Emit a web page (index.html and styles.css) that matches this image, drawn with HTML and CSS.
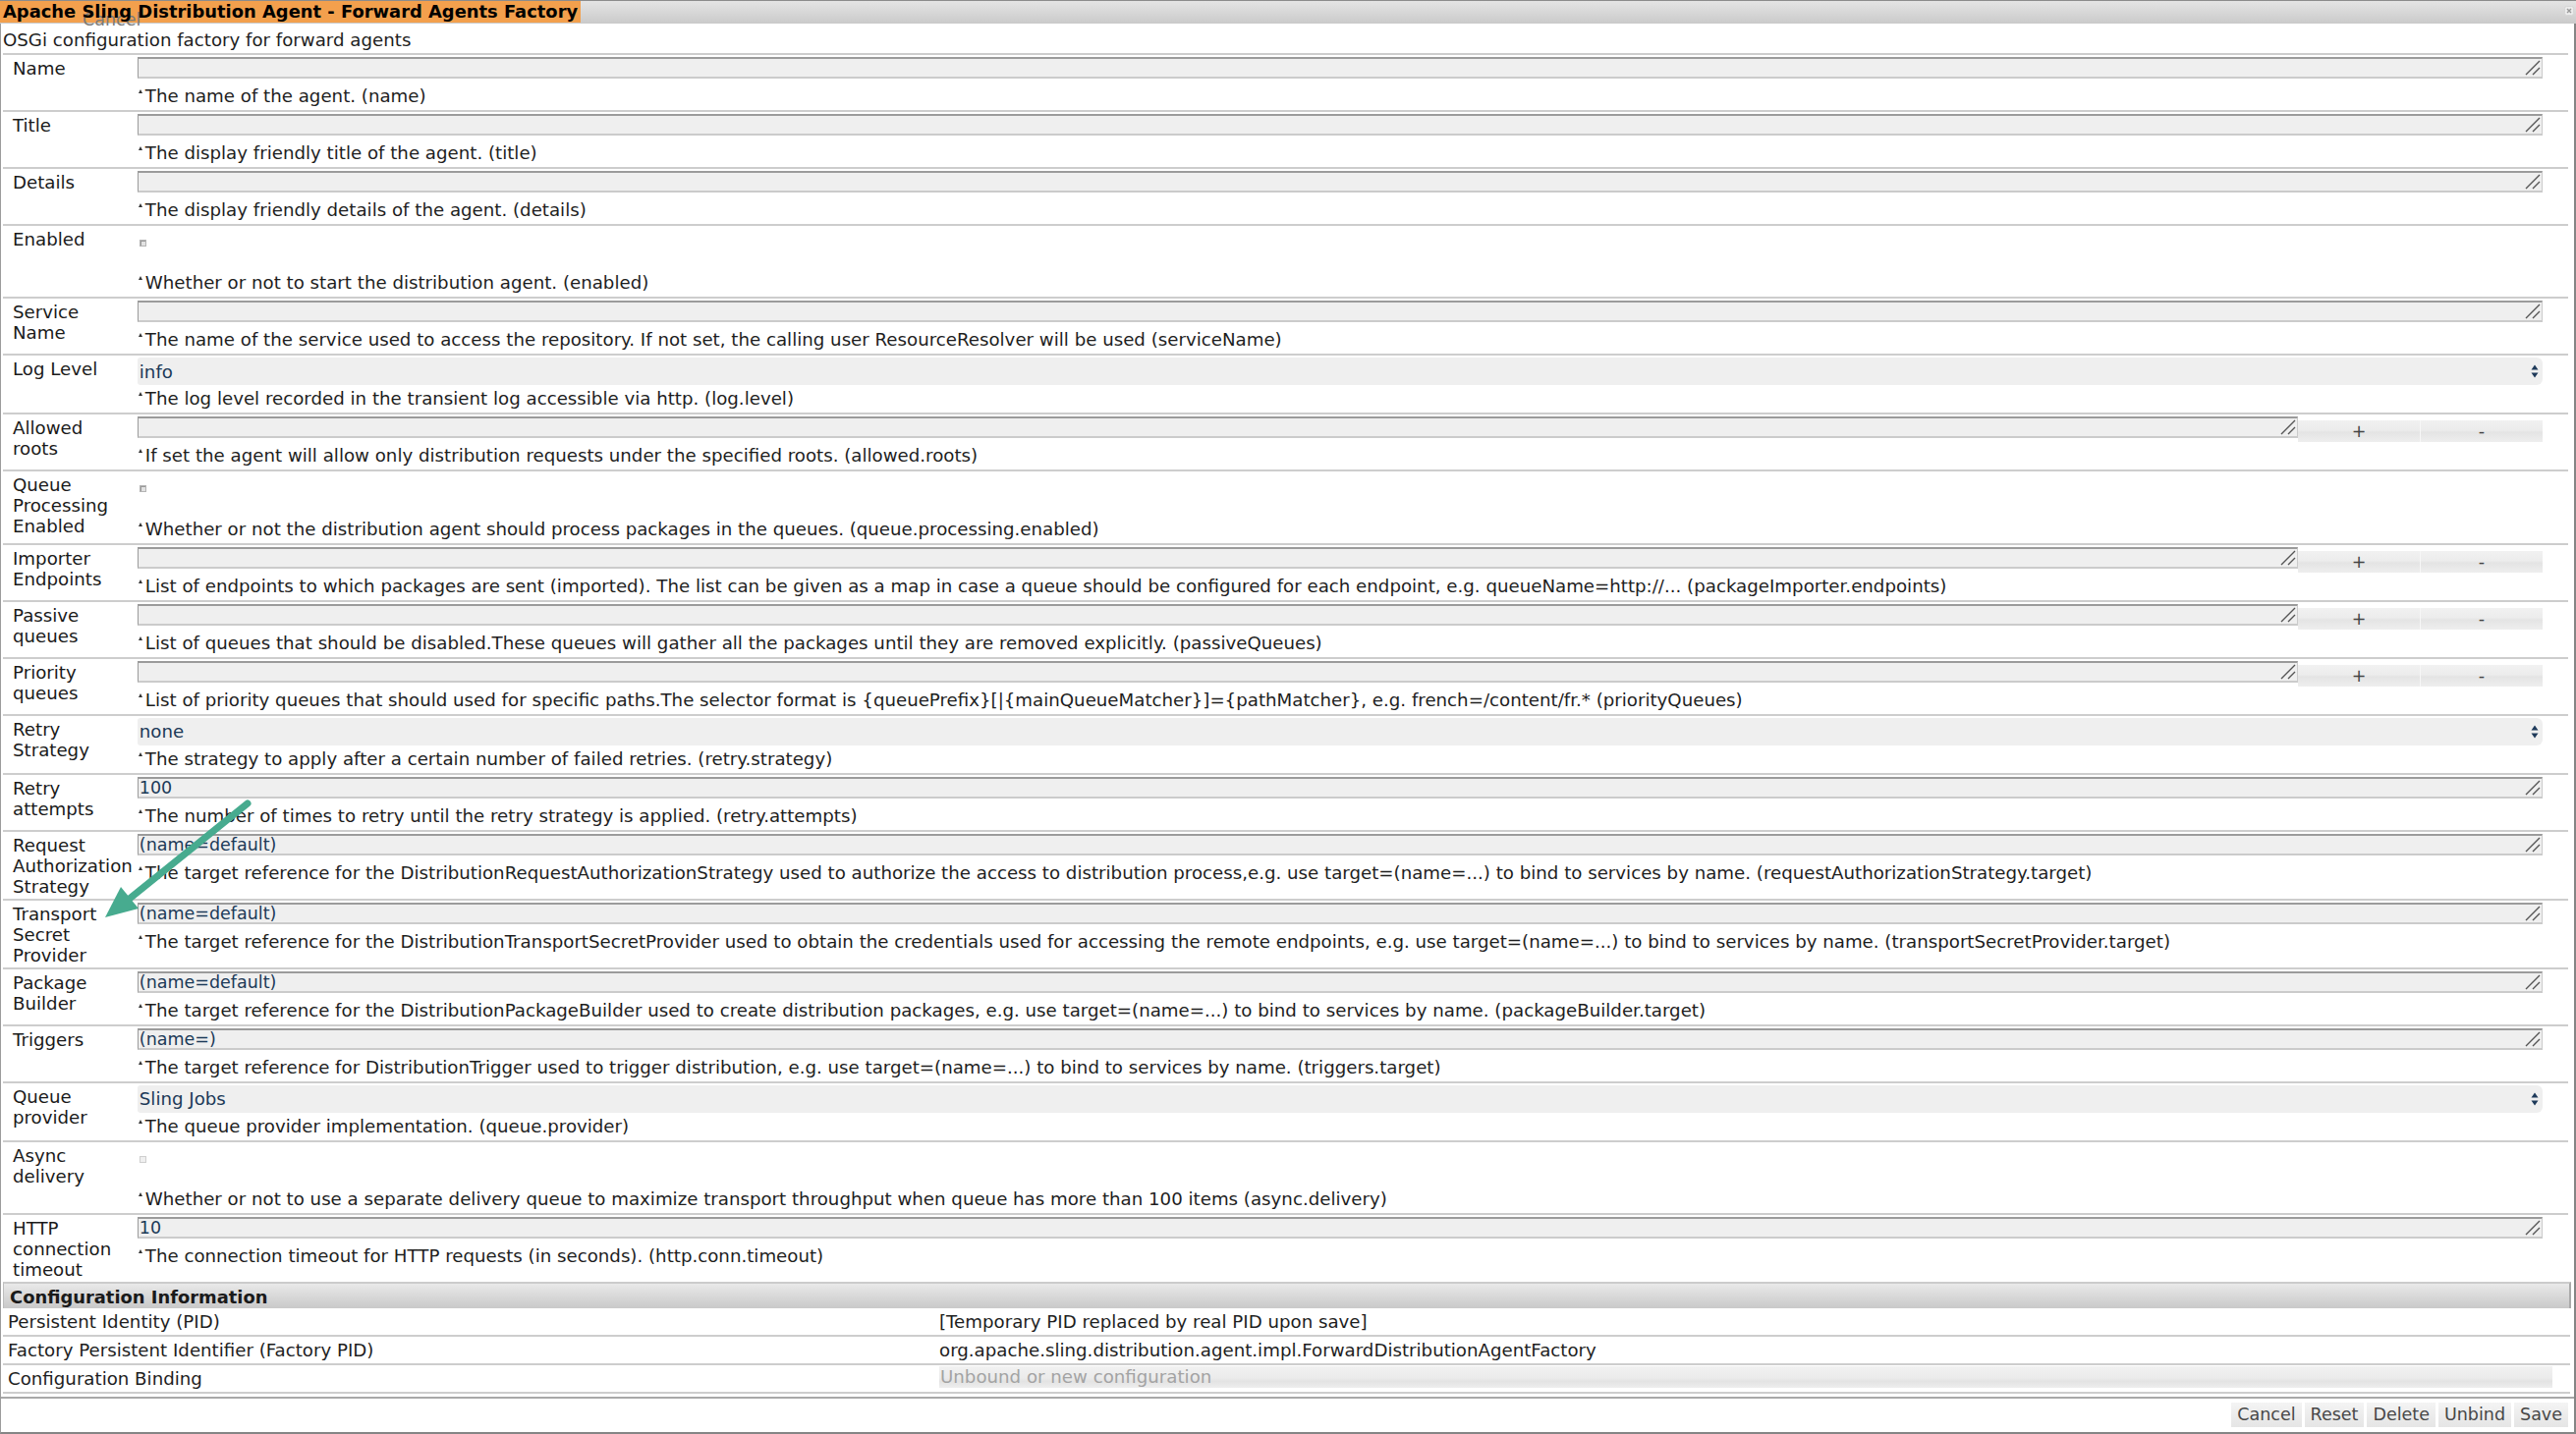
FILE: index.html
```html
<!DOCTYPE html>
<html>
<head>
<meta charset="utf-8">
<title>Apache Sling Distribution Agent - Forward Agents Factory</title>
<link rel="stylesheet" href="styles.css">
</head>
<body>
<div class="window">
  <div class="titlebar">
    <span class="title">Apache Sling Distribution Agent - Forward Agents Factory<span class="ghost">Cancel</span></span>
    <span class="close"><svg width="10" height="10" viewBox="0 0 10 10"><rect x="0.5" y="0.5" width="9" height="9" rx="2" fill="#ececec" stroke="#d6d6d6"/><path d="M3 3 L7 7 M7 3 L3 7" stroke="#9a9a9a" stroke-width="1.4"/></svg></span>
  </div>
  <div class="panel">
    <div class="subtitle">OSGi configuration factory for forward agents</div>
    <table class="props">
      <tr>
        <td class="lbl">Name</td>
        <td class="fld"><div class="tabox"><textarea class="ta"></textarea><svg class="grip" width="16" height="16" viewBox="0 0 16 16"><path d="M1 15 L15 1 M8 15 L15 8" stroke="#555" stroke-width="1.4"/></svg></div><div class="desc"><i class="mk"></i>The name of the agent. (name)</div></td>
      </tr>
      <tr>
        <td class="lbl">Title</td>
        <td class="fld"><div class="tabox"><textarea class="ta"></textarea><svg class="grip" width="16" height="16" viewBox="0 0 16 16"><path d="M1 15 L15 1 M8 15 L15 8" stroke="#555" stroke-width="1.4"/></svg></div><div class="desc"><i class="mk"></i>The display friendly title of the agent. (title)</div></td>
      </tr>
      <tr>
        <td class="lbl">Details</td>
        <td class="fld"><div class="tabox"><textarea class="ta"></textarea><svg class="grip" width="16" height="16" viewBox="0 0 16 16"><path d="M1 15 L15 1 M8 15 L15 8" stroke="#555" stroke-width="1.4"/></svg></div><div class="desc"><i class="mk"></i>The display friendly details of the agent. (details)</div></td>
      </tr>
      <tr>
        <td class="lbl">Enabled</td>
        <td class="fld"><div class="cbwrap"><span class="cb on"></span></div><div class="desc"><i class="mk"></i>Whether or not to start the distribution agent. (enabled)</div></td>
      </tr>
      <tr>
        <td class="lbl">Service Name</td>
        <td class="fld"><div class="tabox"><textarea class="ta"></textarea><svg class="grip" width="16" height="16" viewBox="0 0 16 16"><path d="M1 15 L15 1 M8 15 L15 8" stroke="#555" stroke-width="1.4"/></svg></div><div class="desc"><i class="mk"></i>The name of the service used to access the repository. If not set, the calling user ResourceResolver will be used (serviceName)</div></td>
      </tr>
      <tr>
        <td class="lbl">Log Level</td>
        <td class="fld"><div class="select"><span>info</span><svg width="8" height="14" viewBox="0 0 8 14"><path d="M4 0.5 L7.5 5.5 L0.5 5.5 Z M4 13.5 L7.5 8.5 L0.5 8.5 Z" fill="#1e3a5a"/></svg></div><div class="desc sdesc"><i class="mk"></i>The log level recorded in the transient log accessible via http. (log.level)</div></td>
      </tr>
      <tr>
        <td class="lbl">Allowed roots</td>
        <td class="fld"><div class="multi"><div class="tabox"><textarea class="ta"></textarea><svg class="grip" width="16" height="16" viewBox="0 0 16 16"><path d="M1 15 L15 1 M8 15 L15 8" stroke="#555" stroke-width="1.4"/></svg></div><span class="mbtn">+</span><span class="mbtn minus">-</span></div><div class="desc"><i class="mk"></i>If set the agent will allow only distribution requests under the specified roots. (allowed.roots)</div></td>
      </tr>
      <tr>
        <td class="lbl">Queue Processing Enabled</td>
        <td class="fld"><div class="cbwrap"><span class="cb on"></span></div><div class="desc"><i class="mk"></i>Whether or not the distribution agent should process packages in the queues. (queue.processing.enabled)</div></td>
      </tr>
      <tr>
        <td class="lbl">Importer Endpoints</td>
        <td class="fld"><div class="multi"><div class="tabox"><textarea class="ta"></textarea><svg class="grip" width="16" height="16" viewBox="0 0 16 16"><path d="M1 15 L15 1 M8 15 L15 8" stroke="#555" stroke-width="1.4"/></svg></div><span class="mbtn">+</span><span class="mbtn minus">-</span></div><div class="desc"><i class="mk"></i>List of endpoints to which packages are sent (imported). The list can be given as a map in case a queue should be configured for each endpoint, e.g. queueName=http://... (packageImporter.endpoints)</div></td>
      </tr>
      <tr>
        <td class="lbl">Passive queues</td>
        <td class="fld"><div class="multi"><div class="tabox"><textarea class="ta"></textarea><svg class="grip" width="16" height="16" viewBox="0 0 16 16"><path d="M1 15 L15 1 M8 15 L15 8" stroke="#555" stroke-width="1.4"/></svg></div><span class="mbtn">+</span><span class="mbtn minus">-</span></div><div class="desc"><i class="mk"></i>List of queues that should be disabled.These queues will gather all the packages until they are removed explicitly. (passiveQueues)</div></td>
      </tr>
      <tr>
        <td class="lbl">Priority queues</td>
        <td class="fld"><div class="multi"><div class="tabox"><textarea class="ta"></textarea><svg class="grip" width="16" height="16" viewBox="0 0 16 16"><path d="M1 15 L15 1 M8 15 L15 8" stroke="#555" stroke-width="1.4"/></svg></div><span class="mbtn">+</span><span class="mbtn minus">-</span></div><div class="desc"><i class="mk"></i>List of priority queues that should used for specific paths.The selector format is {queuePrefix}[|{mainQueueMatcher}]={pathMatcher}, e.g. french=/content/fr.* (priorityQueues)</div></td>
      </tr>
      <tr>
        <td class="lbl">Retry Strategy</td>
        <td class="fld"><div class="select"><span>none</span><svg width="8" height="14" viewBox="0 0 8 14"><path d="M4 0.5 L7.5 5.5 L0.5 5.5 Z M4 13.5 L7.5 8.5 L0.5 8.5 Z" fill="#1e3a5a"/></svg></div><div class="desc sdesc"><i class="mk"></i>The strategy to apply after a certain number of failed retries. (retry.strategy)</div></td>
      </tr>
      <tr>
        <td class="lbl">Retry attempts</td>
        <td class="fld"><div class="tabox"><textarea class="ta">100</textarea><svg class="grip" width="16" height="16" viewBox="0 0 16 16"><path d="M1 15 L15 1 M8 15 L15 8" stroke="#555" stroke-width="1.4"/></svg></div><div class="desc"><i class="mk"></i>The number of times to retry until the retry strategy is applied. (retry.attempts)</div></td>
      </tr>
      <tr>
        <td class="lbl">Request Authorization Strategy</td>
        <td class="fld"><div class="tabox"><textarea class="ta">(name=default)</textarea><svg class="grip" width="16" height="16" viewBox="0 0 16 16"><path d="M1 15 L15 1 M8 15 L15 8" stroke="#555" stroke-width="1.4"/></svg></div><div class="desc"><i class="mk"></i>The target reference for the DistributionRequestAuthorizationStrategy used to authorize the access to distribution process,e.g. use target=(name=...) to bind to services by name. (requestAuthorizationStrategy.target)</div></td>
      </tr>
      <tr>
        <td class="lbl">Transport Secret Provider</td>
        <td class="fld"><div class="tabox"><textarea class="ta">(name=default)</textarea><svg class="grip" width="16" height="16" viewBox="0 0 16 16"><path d="M1 15 L15 1 M8 15 L15 8" stroke="#555" stroke-width="1.4"/></svg></div><div class="desc"><i class="mk"></i>The target reference for the DistributionTransportSecretProvider used to obtain the credentials used for accessing the remote endpoints, e.g. use target=(name=...) to bind to services by name. (transportSecretProvider.target)</div></td>
      </tr>
      <tr>
        <td class="lbl">Package Builder</td>
        <td class="fld"><div class="tabox"><textarea class="ta">(name=default)</textarea><svg class="grip" width="16" height="16" viewBox="0 0 16 16"><path d="M1 15 L15 1 M8 15 L15 8" stroke="#555" stroke-width="1.4"/></svg></div><div class="desc"><i class="mk"></i>The target reference for the DistributionPackageBuilder used to create distribution packages, e.g. use target=(name=...) to bind to services by name. (packageBuilder.target)</div></td>
      </tr>
      <tr>
        <td class="lbl">Triggers</td>
        <td class="fld"><div class="tabox"><textarea class="ta">(name=)</textarea><svg class="grip" width="16" height="16" viewBox="0 0 16 16"><path d="M1 15 L15 1 M8 15 L15 8" stroke="#555" stroke-width="1.4"/></svg></div><div class="desc"><i class="mk"></i>The target reference for DistributionTrigger used to trigger distribution, e.g. use target=(name=...) to bind to services by name. (triggers.target)</div></td>
      </tr>
      <tr>
        <td class="lbl">Queue provider</td>
        <td class="fld"><div class="select"><span>Sling Jobs</span><svg width="8" height="14" viewBox="0 0 8 14"><path d="M4 0.5 L7.5 5.5 L0.5 5.5 Z M4 13.5 L7.5 8.5 L0.5 8.5 Z" fill="#1e3a5a"/></svg></div><div class="desc sdesc"><i class="mk"></i>The queue provider implementation. (queue.provider)</div></td>
      </tr>
      <tr>
        <td class="lbl">Async delivery</td>
        <td class="fld"><div class="cbwrap"><span class="cb"></span></div><div class="desc"><i class="mk"></i>Whether or not to use a separate delivery queue to maximize transport throughput when queue has more than 100 items (async.delivery)</div></td>
      </tr>
      <tr>
        <td class="lbl">HTTP connection timeout</td>
        <td class="fld"><div class="tabox"><textarea class="ta">10</textarea><svg class="grip" width="16" height="16" viewBox="0 0 16 16"><path d="M1 15 L15 1 M8 15 L15 8" stroke="#555" stroke-width="1.4"/></svg></div><div class="desc"><i class="mk"></i>The connection timeout for HTTP requests (in seconds). (http.conn.timeout)</div></td>
      </tr>
    </table>
    <div class="cfg-head">Configuration Information</div>
    <table class="cfg">
      <tr><td class="clbl">Persistent Identity (PID)</td><td class="cval">[Temporary PID replaced by real PID upon save]</td></tr>
      <tr><td class="clbl">Factory Persistent Identifier (Factory PID)</td><td class="cval">org.apache.sling.distribution.agent.impl.ForwardDistributionAgentFactory</td></tr>
      <tr><td class="clbl">Configuration Binding</td><td class="cval bind"><div class="bindbox">Unbound or new configuration</div></td></tr>
    </table>
    <div class="buttons">
      <span class="btn">Cancel</span><span class="btn">Reset</span><span class="btn">Delete</span><span class="btn">Unbind</span><span class="btn">Save</span>
    </div>
  </div>
  <svg class="annot" width="170" height="140" viewBox="100 805 170 140">
    <line x1="252" y1="818" x2="128" y2="918" stroke="#47ab8f" stroke-width="7" stroke-linecap="round"/>
    <path d="M107 934 L123 903 L141 925 Z" fill="#47ab8f"/>
  </svg>
</div>
</body>
</html>
```
FILE: styles.css
```css
html, body {
  margin: 0;
  padding: 0;
  background: #ffffff;
}
body {
  font-family: "DejaVu Sans", Verdana, sans-serif;
  font-size: 18.2px;
  color: #1e1e1e;
}
.window {
  position: relative;
  width: 2622px;
  height: 1460px;
  display: flex;
  flex-direction: column;
  overflow: hidden;
}
.titlebar {
  height: 24px;
  box-sizing: border-box;
  border-top: 1px solid #8c8c8c;
  background: linear-gradient(#e4e4e4, #cacaca);
  display: flex;
  align-items: flex-start;
}
.title {
  position: relative;
  z-index: 0;
  display: inline-block;
  background: #f3a04d;
  color: #000;
  font-weight: bold;
  font-size: 17.9px;
  line-height: 22px;
  padding: 0 3px 0 3px;
  white-space: nowrap;
}
.ghost {
  position: absolute;
  z-index: -1;
  left: 84px;
  top: 8px;
  font-weight: normal;
  font-size: 17.5px;
  color: #7a7a7a;
}
.close {
  margin: 5px 2px 0 auto;
  line-height: 0;
}
.panel {
  flex: 1;
  border-left: 1px solid #9c9c9c;
  border-right: 2px solid #858585;
  border-bottom: 2px solid #858585;
  display: flex;
  flex-direction: column;
}
.subtitle {
  padding: 6px 0 2px 2px;
  line-height: 22px;
}
.props {
  margin-left: 2px;
  width: 2611px;
  border-collapse: separate;
  border-spacing: 0;
}
.props td {
  border-top: 2px solid #cdcdcd;
  vertical-align: top;
}
.lbl {
  width: 1px;
  padding: 3px 5px 2px 10px;
  line-height: 21px;
  color: #1a1a1a;
}
.fld {
  padding: 2px 26px 4px 0;
}
.tabox {
  position: relative;
  height: 22px;
}
.ta {
  display: block;
  width: 100%;
  height: 22px;
  box-sizing: border-box;
  margin: 0;
  padding: 0 0 0 1px;
  font-family: inherit;
  font-size: 17.5px;
  line-height: 18px;
  color: #1c3a58;
  background: #efefef;
  border-style: solid;
  border-width: 2px 1px 2px 1px;
  border-color: #9b9b9b #cbcbcb #cbcbcb #9b9b9b;
  resize: none;
  overflow: hidden;
  white-space: nowrap;
}
.grip {
  position: absolute;
  right: 2px;
  bottom: 3px;
}
.multi {
  display: flex;
  align-items: flex-start;
}
.multi .tabox {
  flex: 1;
}
.mbtn {
  width: 124px;
  height: 22px;
  margin: 4px 0 -4px 0;
  text-align: center;
  line-height: 22px;
  font-size: 17.5px;
  color: #444;
  background: linear-gradient(#f1f1f1, #ececec 45%, #e4e4e4 55%, #eeeeee);
}
.mbtn.minus {
  border-left: 1px solid #f7f7f7;
}
.desc {
  margin-top: 8px;
  line-height: 20px;
  white-space: nowrap;
  color: #1e1e1e;
}
.desc.sdesc {
  margin-top: 4px;
}
.mk {
  display: inline-block;
  width: 0;
  height: 0;
  border-left: 2.5px solid transparent;
  border-right: 2.5px solid transparent;
  border-bottom: 4px solid #333;
  vertical-align: top;
  margin: 3px 3px 0 1px;
}
.cbwrap {
  height: 38.5px;
}
.cb {
  display: inline-block;
  width: 5px;
  height: 5px;
  margin: 12px 0 0 2px;
  border: 1px solid #b4b4b4;
  background: #e2e2e2;
  box-shadow: inset 1px 1px 0 #9a9a9a;
}
.cb:not(.on) {
  border-color: #cfcfcf;
  background: #f0f0f0;
  box-shadow: none;
}
.select {
  height: 28px;
  display: flex;
  align-items: center;
  justify-content: space-between;
  background: #efefef;
  border-radius: 3px 6px 6px 3px;
  padding: 0 4px 0 2px;
  color: #1c3a58;
}
.cfg-head {
  margin: 0 3px 0 2px;
  border-top: 2px solid #cbcbcb;
  border-left: 1px solid #bdbdbd;
  border-right: 2px solid #a9a9a9;
  background: linear-gradient(#e9e9e9, #dcdcdc 40%, #c9c9c9);
  padding: 3px 0 1px 6px;
  line-height: 21px;
  font-weight: bold;
  font-size: 17.9px;
  color: #1a1a1a;
}
.cfg {
  margin-left: 2px;
  width: 2613px;
  border-collapse: separate;
  border-spacing: 0;
}
.cfg td {
  border-bottom: 2px solid #cdcdcd;
  padding: 3px 0 3px 0;
  line-height: 21px;
  vertical-align: top;
  white-space: nowrap;
}
.clbl {
  width: 948px;
  padding-left: 5px !important;
}
.cval {
  padding-right: 18px !important;
}
.cval.bind {
  padding: 1px 18px 4px 0 !important;
}
.bindbox {
  line-height: 22px;
  padding-left: 1px;
  color: #a3a3a3;
  background: linear-gradient(#f1f1f1, #ebebeb 55%, #e3e3e3 70%, #eeeeee);
}
.buttons {
  margin-top: 3px;
  border-top: 2px solid #a8a8a8;
  padding: 4px 6px 5px 6px;
  display: flex;
  justify-content: flex-end;
  gap: 3px;
}
.btn {
  height: 25px;
  line-height: 25px;
  padding: 0 6px;
  font-size: 17.5px;
  color: #474747;
  background: linear-gradient(#f4f4f4, #ececec 50%, #e5e5e5);
}
.annot {
  position: absolute;
  left: 100px;
  top: 805px;
  pointer-events: none;
}
```
